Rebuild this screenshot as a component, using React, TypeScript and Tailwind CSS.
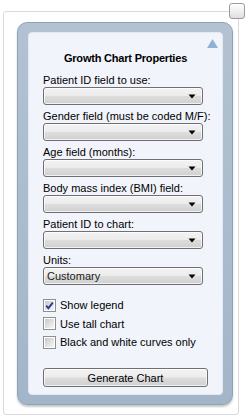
import React from "react";

const font = { fontFamily: '"Liberation Sans", Arial, sans-serif' };

function Arrow() {
  return (
    <svg width="8" height="5" viewBox="0 0 8 5" className="block">
      <path d="M0.5 0.5 L7.5 0.5 L4 4.5 Z" fill="#000" />
    </svg>
  );
}

function Combo({ value }: { value?: string }) {
  return (
    <div className="w-[160px] h-[18px] rounded-[3px] border border-[#707070] bg-[linear-gradient(to_bottom,#f3f3f3_0%,#ececec_48%,#dddddd_52%,#d0d0d0_100%)] shadow-[inset_0_0_0_1px_rgba(255,255,255,0.7)] flex items-center pl-[3px] pr-[6px]">
      <span className="flex-1 text-[11px] leading-[14px] text-[#1a1a1a]">{value}</span>
      <Arrow />
    </div>
  );
}

function Field({ label, value }: { label: string; value?: string }) {
  return (
    <div className="flex flex-col">
      <div className="h-[14px] text-[11px] leading-[14px] text-black whitespace-nowrap">{label}</div>
      <Combo value={value} />
    </div>
  );
}

function Check({ label, checked, h }: { label: string; checked?: boolean; h: string }) {
  return (
    <div className={`flex items-center ${h}`}>
      <div className="w-[13px] h-[13px] border border-[#8e8f8f] bg-white p-[1px] flex">
        <div className="flex-1 bg-[linear-gradient(135deg,#c9c9c9_0%,#e2e2e2_55%,#f7f7f7_100%)] relative">
          {checked && (
            <svg width="11" height="11" viewBox="0 0 11 11" className="absolute -left-[1px] -top-[1px]">
              <path d="M2.2 5.6 L4.4 8.2 L8.8 2.6" stroke="#2d3a96" strokeWidth="1.9" fill="none" strokeLinejoin="miter" />
            </svg>
          )}
        </div>
      </div>
      <span className="ml-[4px] text-[11px] leading-[14px] text-black whitespace-nowrap">{label}</span>
    </div>
  );
}

export default function App() {
  return (
    <div className="relative w-[248px] h-[420px] bg-white pt-[11px] pl-[3px]" style={font}>
      <div className="w-[236px] h-[404px] border border-[#dadada] rounded-[3px] pt-[10px] pl-[13px] pr-[5px]">
        <div className="w-[216px] h-[383px] rounded-[10px] border border-[#8fa3b7] bg-[linear-gradient(to_bottom,#b2c2d2_0%,#a3b6c9_100%)] pt-[9px] pl-[10px] pr-[9px] pb-[9px] shadow-[0_2px_2px_rgba(0,0,0,0.22)]">
          <div className="relative h-full rounded-[4px] bg-[#f1f4fa] border border-[#e3e8f0] pt-[18px] pl-[14px] pr-[20px] pb-[7px] flex flex-col">
            <svg width="11" height="9" viewBox="0 0 11 9" className="absolute right-[4px] top-[6px]">
              <path d="M5.5 0 L11 9 L0 9 Z" fill="#8fb1d4" />
            </svg>
            <div className="h-[14px] -mr-[6px] text-center text-[11px] leading-[14px] font-bold text-black tracking-[-0.2px] whitespace-nowrap">
              Growth Chart Properties
            </div>
            <div className="mt-[8px] flex flex-col gap-[4px]">
              <Field label="Patient ID field to use:" />
              <Field label="Gender field (must be coded M/F):" />
              <Field label="Age field (months):" />
              <Field label="Body mass index (BMI) field:" />
              <Field label="Patient ID to chart:" />
              <Field label="Units:" value="Customary" />
            </div>
            <div className="mt-[11px] flex flex-col">
              <Check label="Show legend" checked h="h-[18px]" />
              <Check label="Use tall chart" h="h-[19px]" />
              <Check label="Black and white curves only" h="h-[18px]" />
            </div>
            <div className="mt-[17px] w-[165px] h-[19px] rounded-[3px] border border-[#707070] bg-[linear-gradient(to_bottom,#f3f3f3_0%,#ececec_48%,#dddddd_52%,#d0d0d0_100%)] shadow-[inset_0_0_0_1px_rgba(255,255,255,0.7)] flex items-center justify-center text-[11px] leading-[14px] text-black">
              Generate Chart
            </div>
          </div>
        </div>
      </div>
      <div className="absolute left-[229px] top-[3px] w-[16px] h-[16px] rounded-[3px] border border-[#9c9c9c] bg-[linear-gradient(to_bottom,#ffffff_0%,#f0f0f0_50%,#dedede_100%)]" />
    </div>
  );
}
